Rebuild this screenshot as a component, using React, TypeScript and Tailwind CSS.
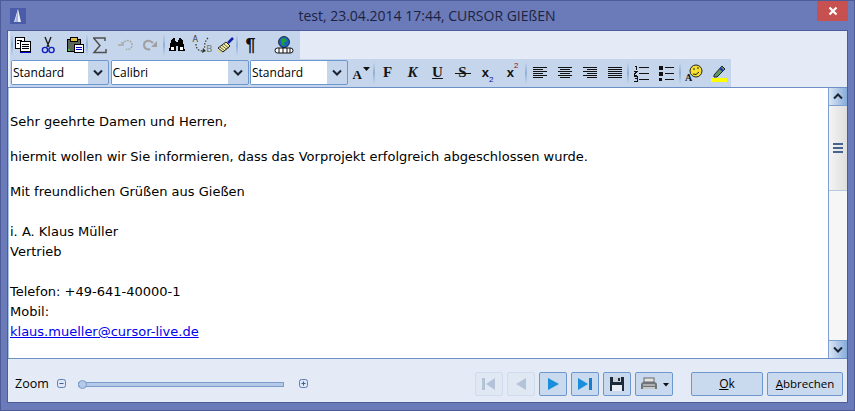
import React from "react";

const Sep = () => <div className="w-[2px] h-[22px] bg-gradient-to-b from-[#c5d5eb] via-[#8fb0d8] to-[#c5d5eb] shrink-0" />;

const Ic = ({ w = 25, children }: { w?: number; children: React.ReactNode }) => (
  <div className="h-full flex items-center justify-center shrink-0" style={{ width: w }}>
    {children}
  </div>
);

const S = ({ children, w = 18, h = 18 }: { children: React.ReactNode; w?: number; h?: number }) => (
  <svg width={w} height={h} viewBox={`0 0 ${w} ${h}`} shapeRendering="crispEdges">{children}</svg>
);

const Lines = ({ rows }: { rows: [number, number][] }) => (
  <S>
    {rows.map(([x, w], i) => (
      <rect key={i} x={x} y={3 + i * 2} width={w} height={1} fill="#111" />
    ))}
  </S>
);

const Combo = ({ label, w }: { label: string; w: number }) => (
  <div className="h-[25px] border border-[#6d98cf] rounded-[2px] flex items-stretch shrink-0 bg-[#c5d5eb]" style={{ width: w }}>
    <div className="flex-1 bg-white pl-[1px] flex items-center text-[12px] text-black font-['Open_Sans',sans-serif] leading-none">{label}</div>
    <div className="w-[20px] flex items-center justify-center">
      <svg width="10" height="7" viewBox="0 0 10 7"><path d="M1 1.5 L5 5.5 L9 1.5" fill="none" stroke="#1a2433" strokeWidth="2" /></svg>
    </div>
  </div>
);

const Serif = ({ c, cls = "" }: { c: string; cls?: string }) => (
  <span className={`font-['Liberation_Serif',serif] font-bold text-[15px] leading-none text-[#161616] ${cls}`}>{c}</span>
);

const NavBtn = ({ off, children, w = 28 }: { off?: boolean; children: React.ReactNode; w?: number }) => (
  <div
    className={`h-[24px] rounded-[2px] border flex items-center justify-center shrink-0 ${off ? "border-[#cfdcee] bg-[#e0e8f4]" : "border-[#6d98cf] bg-[#c9d9ee]"}`}
    style={{ width: w }}
  >
    {children}
  </div>
);

const Line = ({ children, mt = 0 }: { children: React.ReactNode; mt?: number }) => (
  <div className="h-5 leading-5 whitespace-nowrap" style={{ marginTop: mt }}>{children}</div>
);

export default function App() {
  return (
    <div className="w-[855px] h-[411px] bg-[#6b7ab9] border border-[#4d5c99] flex flex-col overflow-hidden">
      {/* title bar */}
      <div className="h-[29px] flex items-center pl-[9px] relative shrink-0">
        <div className="w-4 h-4 bg-[#4a5ba8] flex items-center justify-center">
          <svg width="12" height="16" viewBox="0 0 12 16"><path d="M6 1 L9 14 L2 14 Z" fill="#e8ecf6" /><path d="M6 1 L6 14 L3 14 Z" fill="#a9b4dc" /></svg>
        </div>
        <div className="flex-1 text-center text-[14px] leading-none text-[#1c2340] font-['Open_Sans',sans-serif] pl-[11px] mt-[1px]">
          test, 23.04.2014 17:44, CURSOR GIEßEN
        </div>
        <div className="w-[31px] h-[20px] mr-[6px] -mt-[9px] bg-[#c75050] flex items-center justify-center">
          <svg width="10" height="10" viewBox="0 0 10 10"><path d="M1.5 1.5 L8.5 8.5 M8.5 1.5 L1.5 8.5" stroke="#fff" strokeWidth="2.2" /></svg>
        </div>
      </div>

      {/* panel */}
      <div className="mx-[6px] mb-[7px] flex-1 min-h-0 bg-[#e4ebf6] border border-[#4d5c99] flex flex-col">
        {/* toolbar 1 */}
        <div className="pl-[2px] shrink-0">
          <div className="w-[290px] h-[28px] bg-[#c5d5eb] flex items-center pl-[1px]">
            <Sep />
            <Ic w={19}>
              <S>
                <rect x="1.5" y="1.5" width="9" height="11" fill="#fff" stroke="#000" />
                <rect x="6.5" y="5.5" width="10" height="10" fill="#fff" stroke="#000" />
                <path d="M3 4h5M3 7h2M8 8h7M8 10h7M8 12h7" stroke="#000" />
                <path d="M6 16h11" stroke="#0000c8" />
              </S>
            </Ic>
            <Ic w={31}>
              <svg width="18" height="18" viewBox="0 0 18 18">
                <path d="M6 1 L10 11 M12 1 L8 11" stroke="#222" strokeWidth="1.4" fill="none" />
                <circle cx="6" cy="14" r="2.6" fill="none" stroke="#1020c0" strokeWidth="1.4" />
                <circle cx="12.5" cy="14" r="2.6" fill="none" stroke="#1020c0" strokeWidth="1.4" />
              </svg>
            </Ic>
            <Ic w={23}>
              <S>
                <rect x="1.5" y="3.5" width="13" height="12" fill="#5c6a5c" stroke="#000" />
                <rect x="4.5" y="1.5" width="7" height="4" fill="#e0c040" stroke="#000" />
                <rect x="8.5" y="8.5" width="9" height="8" fill="#fff" stroke="#000" />
                <path d="M10 11h6M10 13h6" stroke="#0000c8" />
                <rect x="2" y="13" width="2" height="2" fill="#40c040" />
              </S>
            </Ic>
            <Sep />
            <Ic w={24}>
              <svg width="16" height="17" viewBox="0 0 16 17"><path d="M1 1H13V4M2 1.5L8 8.5L2 15.5H14V12" fill="none" stroke="#505050" strokeWidth="1.5" /></svg>
            </Ic>
            <Ic>
              <svg width="18" height="14" viewBox="0 0 18 14"><path d="M8 4 C12 1 16 3 16 7 C16 11 12 12 10 11" fill="none" stroke="#a8a8a8" strokeWidth="1.4" strokeDasharray="2 1" /><path d="M2 7h6M5 5h3" stroke="#a8a8a8" strokeWidth="1.4" /></svg>
            </Ic>
            <Ic>
              <svg width="18" height="14" viewBox="0 0 18 14"><path d="M12 5 C8 1 3 3 3 7 C3 11 7 12 9 11" fill="none" stroke="#a0a0a0" strokeWidth="2" /><path d="M16 3 L16 9 L10 9 Z" fill="#a0a0a0" /></svg>
            </Ic>
            <div className="w-[1px]" />
            <Sep />
            <Ic w={24}>
              <S>
                <path d="M1 15 L3 5 L5 2 L7 2 L8 7 L8 15 L3 15 Z M10 15 L10 7 L11 2 L13 2 L15 5 L17 15 L15 15 Z" fill="#000" />
                <rect x="7" y="6" width="4" height="4" fill="#000" />
                <rect x="3" y="11" width="3" height="3" fill="#fff" />
                <rect x="12" y="11" width="3" height="3" fill="#fff" />
              </S>
            </Ic>
            <Ic w={27}>
              <div className="relative w-[20px] h-[18px]">
                <svg width="20" height="18" viewBox="0 0 20 18" className="absolute inset-0">
                  <path d="M3 8 C3 12 5 15 10 15 M15 2 C12 5 11 9 12 13" fill="none" stroke="#333" strokeWidth="1.2" strokeDasharray="1.5 1.5" />
                  <path d="M10 12 L13 15 L9 17 Z" fill="#333" />
                </svg>
                <span className="absolute left-0 top-0 text-[8px] leading-none text-[#333] font-['DejaVu_Sans',sans-serif]">A</span>
                <span className="absolute right-0 bottom-0 text-[9px] leading-none text-[#777] font-['DejaVu_Sans',sans-serif]">B</span>
              </div>
            </Ic>
            <Ic w={20}>
              <svg width="18" height="18" viewBox="0 0 18 18">
                <path d="M1 12 L9 6 L13 10 L6 16 Z" fill="#f6f0a0" stroke="#222" />
                <path d="M3 11 L8 15 M5 9.5 L10 13.5 M7 8 L11.5 12" stroke="#222" strokeWidth="0.7" />
                <path d="M11 7 L16 2" stroke="#1020a0" strokeWidth="2.5" />
                <path d="M1 15 L5 17" stroke="#f0e020" strokeDasharray="1 1" />
              </svg>
            </Ic>
            <Sep />
            <Ic w={25}>
              <span className="font-['Liberation_Sans',sans-serif] font-bold text-[18px] leading-none text-[#111]">¶</span>
            </Ic>
            <div className="w-[5px]" />
            <Ic w={32}>
              <svg width="20" height="18" viewBox="0 0 20 18">
                <circle cx="10" cy="6" r="5.5" fill="#1a60c8" stroke="#111" strokeWidth="0.8" />
                <path d="M7 3 L11 2 L13 5 L10 7 L11 10 L8 9 Z" fill="#20a030" />
                <rect x="1" y="12" width="18" height="5" rx="2.5" fill="#fff" stroke="#111" />
                <path d="M5 12v5M9 12v5M13 12v5M16 12v5" stroke="#111" />
              </svg>
            </Ic>
          </div>
        </div>

        {/* toolbar 2 */}
        <div className="pl-[2px] shrink-0">
          <div className="w-[721px] h-[28px] bg-[#c5d5eb] flex items-center pl-[1px] pb-[1px]">
            <Combo label="Standard" w={98} />
            <div className="w-[2px]" />
            <Combo label="Calibri" w={138} />
            <div className="w-[2px]" />
            <Combo label="Standard" w={98} />
            <Ic w={25}>
              <div className="relative w-[18px] h-[16px]">
                <span className="absolute left-[1px] bottom-0 font-['Liberation_Serif',serif] font-bold text-[13px] leading-none text-[#111]">A</span>
                <svg width="7" height="5" viewBox="0 0 7 5" className="absolute right-0 top-[2px]"><path d="M0 0h7L3.5 4Z" fill="#111" /></svg>
              </div>
            </Ic>
            <Sep />
            <Ic><Serif c="F" /></Ic>
            <Ic><Serif c="K" cls="italic" /></Ic>
            <Ic><Serif c="U" cls="underline" /></Ic>
            <Ic>
              <div className="relative flex items-center justify-center w-[16px] h-[16px]">
                <Serif c="S" />
                <div className="absolute left-0 right-0 top-[8px] h-[1px] bg-[#161616]" />
              </div>
            </Ic>
            <Ic>
              <span className="font-['Liberation_Sans',sans-serif] font-bold text-[13px] leading-none text-[#111]">x<sub className="text-[8px] font-normal text-[#101090] align-[-3px]">2</sub></span>
            </Ic>
            <Ic>
              <span className="font-['Liberation_Sans',sans-serif] font-bold text-[13px] leading-none text-[#111]">x<sup className="text-[8px] font-normal text-[#a01010] align-[5px]">2</sup></span>
            </Ic>
            <Sep />
            <Ic><Lines rows={[[2, 14], [2, 10], [2, 14], [2, 10], [2, 14], [2, 10]]} /></Ic>
            <Ic><Lines rows={[[2, 14], [4, 10], [2, 14], [4, 10], [2, 14], [4, 10]]} /></Ic>
            <Ic><Lines rows={[[2, 14], [6, 10], [2, 14], [6, 10], [2, 14], [6, 10]]} /></Ic>
            <Ic><Lines rows={[[2, 14], [2, 14], [2, 14], [2, 14], [2, 14], [2, 14]]} /></Ic>
            <Sep />
            <Ic w={24}>
              <S>
                <path d="M3 2h1v4M2 7h3v1l-3 2v1h3M2 12h3v5H2M3 14h2" stroke="#111" fill="none" />
                <path d="M7 3h10M7 9h10M7 15h10" stroke="#111" />
              </S>
            </Ic>
            <Ic w={26}>
              <S>
                <rect x="2" y="2" width="4" height="4" fill="#111" />
                <rect x="2" y="8" width="4" height="4" fill="#111" />
                <rect x="2" y="14" width="3" height="3" fill="#111" />
                <path d="M8 3h9M8 9h9M8 15h9" stroke="#111" />
              </S>
            </Ic>
            <Sep />
            <Ic w={26}>
              <svg width="20" height="18" viewBox="0 0 20 18">
                <circle cx="12" cy="7" r="6" fill="#f5e030" stroke="#222" />
                <path d="M9 5h2M13 4h2M9 10 Q12 12 15 8" stroke="#222" fill="none" />
                <text x="1" y="17" fontSize="10" fontWeight="bold" fontFamily="Liberation Serif" fill="#111">A</text>
              </svg>
            </Ic>
            <Ic w={24}>
              <svg width="18" height="18" viewBox="0 0 18 18">
                <path d="M4 11 L12 2 L15 5 L7 13 L4 13 Z" fill="#5a9a5a" stroke="#223" />
                <path d="M10 4 L13 7" stroke="#2030b0" strokeWidth="2" />
                <rect x="1" y="14" width="16" height="4" fill="#ffff00" />
              </svg>
            </Ic>
          </div>
        </div>

        {/* editor + scrollbar */}
        <div className="h-[272px] shrink-0 flex border-y border-[#6d8fc4]">
          <div className="flex-1 bg-white border-l border-[#a9c3e4] border-r border-r-[#7da0d0] pl-[1px] pt-[24px] text-[13px] text-black font-['DejaVu_Sans',sans-serif]">
            <Line>Sehr geehrte Damen und Herren,</Line>
            <Line mt={15}>hiermit wollen wir Sie informieren, dass das Vorprojekt erfolgreich abgeschlossen wurde.</Line>
            <Line mt={15}>Mit freundlichen Grüßen aus Gießen</Line>
            <Line mt={20}>i. A. Klaus Müller</Line>
            <Line>Vertrieb</Line>
            <Line mt={20}>Telefon: +49-641-40000-1</Line>
            <Line>Mobil:</Line>
            <Line><span className="text-[#0000ee] underline">klaus.mueller@cursor-live.de</span></Line>
          </div>
          <div className="w-[18px] shrink-0 flex flex-col bg-[#f6f6f6]">
            <div className="h-[18px] bg-gradient-to-r from-[#dbe6f5] to-[#86abd9] border-b border-[#7da0d0] flex items-center justify-center">
              <svg width="10" height="7" viewBox="0 0 10 7"><path d="M1 5.5 L5 1.5 L9 5.5" fill="none" stroke="#1a2433" strokeWidth="2" /></svg>
            </div>
            <div className="h-[85px] bg-gradient-to-r from-[#f4f4f4] to-[#dedede] border-b border-[#b8c8de] flex items-center justify-center">
              <div className="w-[10px] flex flex-col gap-[2px]">
                <div className="h-[2px] bg-[#44648f]" />
                <div className="h-[2px] bg-[#44648f]" />
                <div className="h-[2px] bg-[#44648f]" />
              </div>
            </div>
            <div className="flex-1" />
            <div className="h-[18px] bg-gradient-to-r from-[#dbe6f5] to-[#86abd9] border-t border-[#7da0d0] flex items-center justify-center">
              <svg width="10" height="7" viewBox="0 0 10 7"><path d="M1 1.5 L5 5.5 L9 1.5" fill="none" stroke="#1a2433" strokeWidth="2" /></svg>
            </div>
          </div>
        </div>

        {/* footer */}
        <div className="flex-1 flex items-center pl-[7px] pr-[4px] pt-[7px]">
          <span className="text-[12.5px] leading-none text-black font-['Open_Sans',sans-serif] w-[42px]">Zoom</span>
          <svg width="10" height="10" viewBox="0 0 10 10" className="shrink-0"><rect x="0.5" y="0.5" width="8" height="8" rx="2" fill="#dce6f4" stroke="#5f7fb5" /><path d="M2.5 4.5h4" stroke="#3f5f95" /></svg>
          <div className="w-[11px] shrink-0" />
          <div className="relative w-[206px] h-[5px] bg-[#b4cae8] border border-[#7c9ccd] shrink-0">
            <div className="absolute left-[-1px] top-[-3px] w-[9px] h-[9px] rounded-full bg-[#b4cae8] border border-[#7c9ccd]" />
          </div>
          <div className="w-[15px] shrink-0" />
          <svg width="10" height="10" viewBox="0 0 10 10" className="shrink-0"><rect x="0.5" y="0.5" width="8" height="8" rx="2" fill="#dce6f4" stroke="#5f7fb5" /><path d="M2.5 4.5h4M4.5 2.5v4" stroke="#3f5f95" /></svg>
          <div className="flex-1" />
          <div className="flex gap-[4px] items-center">
            <NavBtn off>
              <svg width="16" height="14" viewBox="0 0 16 14"><rect x="1" y="1" width="3" height="12" fill="#b4c4d8" /><path d="M14 1V13L5 7Z" fill="#b4c4d8" /></svg>
            </NavBtn>
            <NavBtn off>
              <svg width="14" height="14" viewBox="0 0 14 14"><path d="M12 1V13L2 7Z" fill="#b4c4d8" /></svg>
            </NavBtn>
            <NavBtn>
              <svg width="14" height="14" viewBox="0 0 14 14"><path d="M2 1V13L13 7Z" fill="#1a8ed8" /></svg>
            </NavBtn>
            <NavBtn>
              <svg width="16" height="14" viewBox="0 0 16 14"><path d="M1 1V13L11 7Z" fill="#1a8ed8" /><rect x="12" y="1" width="3" height="12" fill="#1a7cc8" /></svg>
            </NavBtn>
            <NavBtn>
              <svg width="16" height="16" viewBox="0 0 16 16" shapeRendering="crispEdges"><path d="M1 1H14L15 2V15H1Z" fill="#1d2a3a" /><rect x="4" y="1" width="8" height="5" fill="#c8d0dc" /><rect x="9" y="2" width="2" height="3" fill="#1d2a3a" /><rect x="3" y="9" width="10" height="6" fill="#e8ecf4" /></svg>
            </NavBtn>
            <NavBtn w={38}>
              <svg width="18" height="14" viewBox="0 0 18 14"><rect x="4" y="1" width="10" height="4" fill="#e4e4e4" stroke="#666" /><path d="M1 8 Q1 5 4 5 H14 Q17 5 17 8 V12 H1 Z" fill="#707478" /><path d="M3 8h12" stroke="#e8e8e8" /><rect x="3" y="10" width="12" height="2" fill="#c8c8c8" /></svg>
              <svg width="6" height="4" viewBox="0 0 6 4" className="ml-[5px] mt-[2px]"><path d="M0 0h6L3 3.5Z" fill="#111" /></svg>
            </NavBtn>
          </div>
          <div className="w-[18px] shrink-0" />
          <div className="h-[24px] w-[72px] rounded-[2px] border border-[#6d98cf] bg-[#c9d9ee] flex items-center justify-center text-[12px] text-black font-['Open_Sans',sans-serif]">
            <span><span className="underline">O</span>k</span>
          </div>
          <div className="w-[4px] shrink-0" />
          <div className="h-[24px] w-[76px] rounded-[2px] border border-[#6d98cf] bg-[#c9d9ee] flex items-center justify-center text-[11.5px] text-black font-['Open_Sans',sans-serif]">
            <span><span className="underline">A</span>bbrechen</span>
          </div>
        </div>
      </div>
    </div>
  );
}
